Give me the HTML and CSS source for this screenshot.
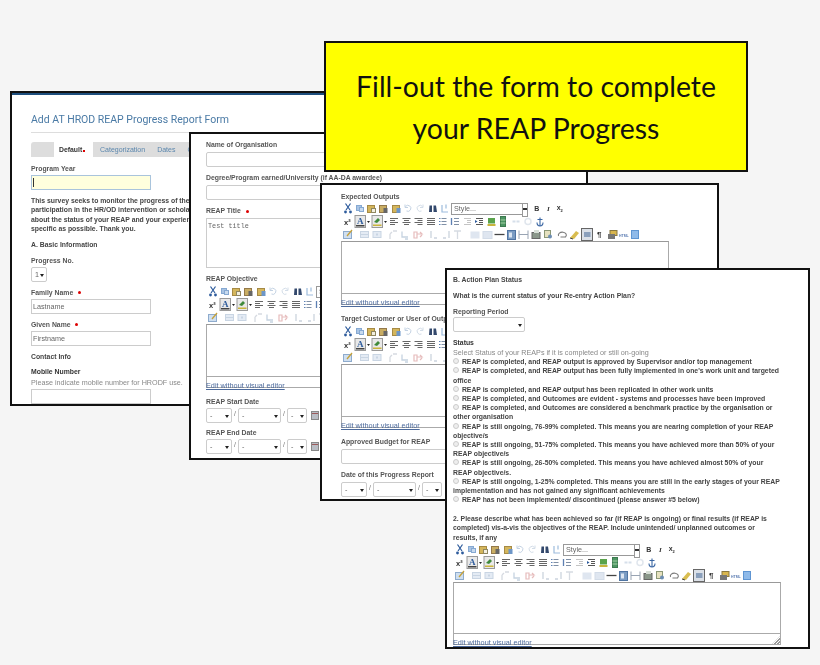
FILE: index.html
```html
<!DOCTYPE html>
<html lang="en">
<head>
    <meta charset="UTF-8">
    <meta name="viewport" content="width=device-width, initial-scale=1.0">
    <title>REAP Progress Report Form</title>
    <link rel="stylesheet" href="styles.css">
</head>
<body>
    <!-- editor toolbar strips, shared by all the rich text fields -->
    <svg class="defs" xmlns="http://www.w3.org/2000/svg">
        <symbol id="row1" viewBox="0 0 110 13">
            <path d="M4.500 1.500l4.500 6.500M9.500 1.500L5 8" stroke="#2d5b9c" stroke-width="1.200" fill="none"/>
            <circle cx="4.500" cy="10" r="1.400" fill="#2d5b9c"/><circle cx="9.500" cy="10" r="1.400" fill="#2d5b9c"/>
            <rect x="15.500" y="3.500" width="5" height="5" fill="#a9c4e4" stroke="#86a9d2"/>
            <rect x="18.500" y="5.500" width="4" height="4" fill="#c8daee" stroke="#86a9d2"/>
            <rect x="26.500" y="3.500" width="7" height="7" fill="#d4b65c" stroke="#a68a45"/>
            <rect x="30.500" y="6.500" width="4" height="4" fill="#f3efe0" stroke="#8f8760"/>
            <rect x="38.500" y="3.500" width="7" height="7" fill="#c9ad63" stroke="#94794a"/>
            <rect x="42.500" y="6" width="4" height="5" fill="#666"/>
            <rect x="51.500" y="3.500" width="7" height="7" fill="#d4b65c" stroke="#a68a45"/>
            <rect x="55.500" y="6" width="4" height="5" fill="#6d96c8"/>
            <path d="M64.500 4.500a3 3 0 1 1 1 4.500M64 2.500v3h3" stroke="#c3d2e3" stroke-width="1" fill="none"/>
            <path d="M81.500 4.500a3 3 0 1 0-1 4.500M82 2.500v3h-3" stroke="#d3dde8" stroke-width="1" fill="none"/>
            <path d="M88.500 3.500h2.500v6.500h-3zM92.500 3.500h2.500l1 6.500h-3.500z" fill="#33486c"/>
            <path d="M101 3v7h4M105 2.500v4M103 10h4" stroke="#9dbcdd" stroke-width="1.200" fill="none"/>
        </symbol>
        <symbol id="row2" viewBox="0 0 210 13">
            <text x="3" y="9.500" class="mini-b">x²</text>
            <rect x="14" y="0.500" width="10.500" height="12" fill="#e9e9e9" stroke="#999"/>
            <text x="16" y="9" class="mini-a">A</text>
            <rect x="15" y="10" width="8.500" height="1.500" fill="#444"/>
            <path d="M26 6h3l-1.500 2z" fill="#222"/>
            <rect x="31" y="0.500" width="10.500" height="12" fill="#e9e9e9" stroke="#999"/>
            <path d="M33 7l4-4 2 2-3 3z" fill="#3f8a3a"/><rect x="32" y="9.500" width="8.500" height="1.500" fill="#c9b43c"/>
            <path d="M43 6h3l-1.500 2z" fill="#222"/>
            <path d="M49 3.500h8M49 5.500h5M49 7.500h8M49 9.500h5" stroke="#666"/>
            <path d="M61.500 3.500h8M63 5.500h5M61.500 7.500h8M63 9.500h5" stroke="#666"/>
            <path d="M73.500 3.500h8M76.500 5.500h5M73.500 7.500h8M76.500 9.500h5" stroke="#666"/>
            <path d="M86 3.500h8M86 5.500h8M86 7.500h8M86 9.500h8" stroke="#666"/>
            <path d="M100.500 3.500h5M100.500 6.500h5M100.500 9.500h5" stroke="#8090a6"/><path d="M98 3.500h1.500M98 6.500h1.500M98 9.500h1.500" stroke="#5d80b3"/>
            <path d="M113 3.500h5M113 6.500h5M113 9.500h5" stroke="#8090a6"/><path d="M110.500 3v7" stroke="#5d80b3" stroke-width="1.300"/>
            <path d="M123 3.500h7M126 5.500h4M126 7.500h4M123 9.500h7" stroke="#c4c4c4"/>
            <path d="M135 3.500h7M138 5.500h4M138 7.500h4M135 9.500h7" stroke="#555"/><path d="M134 5l2.500 1.500-2.500 1.500z" fill="#2d5b9c"/>
            <rect x="147" y="3" width="7" height="5.500" fill="#5aa34b"/><rect x="146.500" y="9" width="8" height="2" fill="#c9b43c"/>
            <rect x="159.500" y="1.500" width="5" height="10" fill="#4d9663" stroke="#3c7a4f"/><path d="M159.500 5h5M159.500 8h5" stroke="#a5d0a5"/>
            <path d="M171.500 6.500h7" stroke="#d6dfea" stroke-width="2" stroke-dasharray="3 1"/>
            <circle cx="187" cy="6.500" r="3" fill="none" stroke="#e0e6ed" stroke-width="1.500"/>
            <path d="M199 2.500v8.500M196.500 4.500h5M196 7.500c0 4.500 6 4.500 6 0" stroke="#3a66a3" stroke-width="1.100" fill="none"/>
        </symbol>
        <symbol id="row3a" viewBox="0 0 252 13">
            <rect x="2.500" y="3.500" width="8" height="7" fill="#cfdff0" stroke="#8eabcd"/><path d="M6 8l5-6" stroke="#c5a13a" stroke-width="1.300"/>
            <rect x="19.500" y="3.500" width="8" height="6" fill="#e4ebf4" stroke="#c9d5e3"/><path d="M19.500 6.500h8" stroke="#c9d5e3"/>
            <rect x="32" y="3.500" width="8" height="6" fill="#e4ebf4" stroke="#c9d5e3"/><rect x="35" y="5.500" width="2" height="2" fill="#c9d5e3"/>
            <path d="M49 11V6M52 3h4M49 6l2-2" stroke="#d6dae1" stroke-width="1.300" fill="none"/>
            <path d="M61 3.500v5.500h6M64 11h3" stroke="#c6d3e1" stroke-width="1.300" fill="none"/>
            <path d="M73 4h3v6h-3zM76 6h5l-2-2M79 9l2-2" stroke="#e6bcbc" stroke-width="1.200" fill="none"/>
            <path d="M90 3v7M93 10h3" stroke="#ccd4de" stroke-width="1.300" fill="none"/>
            <path d="M102 10h3M108 3v7" stroke="#ccd4de" stroke-width="1.300" fill="none"/>
            <path d="M113 3h7M116.500 3v8" stroke="#d6dbe2" stroke-width="1.300" fill="none"/>
            <rect x="129.500" y="3.500" width="9" height="7" fill="#dfe6f0"/>
            <rect x="142" y="3.500" width="9" height="7" fill="#dfe6f0" stroke="#d3dce8"/>
            <path d="M153.500 6.500h10" stroke="#444" stroke-width="1.300"/>
            <rect x="166.500" y="2.500" width="8" height="9" fill="#7b9cc3" stroke="#4f74a2"/><rect x="168" y="4.500" width="3" height="5" fill="#dce6f2"/>
            <path d="M178 2.500v8.500M187 2.500v8.500M178 6.500h9" stroke="#99a4b3" stroke-width="1"/>
            <rect x="191" y="4.500" width="8" height="6" fill="#8a978a" stroke="#666"/><rect x="193" y="2" width="5" height="3" fill="#d6ded6"/>
            <rect x="203.500" y="2.500" width="6" height="7" fill="#e6e1bf" stroke="#8b9775"/><circle cx="209" cy="8.500" r="2" fill="#6d8db2"/>
            <path d="M217.500 8a4 3 0 1 1 7 1h-5" stroke="#7a7a7a" stroke-width="1.100" fill="none"/>
            <path d="M229 10l6-7 3 2-5 6z" fill="#d9bd50"/><path d="M229 10l3 1" stroke="#444"/>
            <rect x="240.500" y="0.500" width="11" height="12" fill="#dbe0e7" stroke="#666"/><rect x="243" y="4" width="6.500" height="5" fill="#8ba0bc"/>
        </symbol>
        <symbol id="row3b" viewBox="0 0 55 13">
            <rect x="17" y="2.500" width="7" height="5" fill="#d9b64e" stroke="#8a7840"/><rect x="15" y="6" width="7" height="5" fill="#777"/>
            <text x="26" y="8.500" class="mini-h">HTML</text>
            <rect x="38.500" y="2.500" width="7" height="8" fill="#8fbae9" stroke="#5f95d2"/>
        </symbol>
        <symbol id="calendar" viewBox="0 0 9 9">
            <rect x="0.500" y="0.500" width="7" height="8" fill="#b9bdc4" stroke="#888"/><path d="M1 2.500h6" stroke="#9b5a5a"/>
        </symbol>
    </svg>

    <section class="sheet sheet-main">
        <h1 class="form-title">Add AT HROD REAP Progress Report Form</h1>
        <div class="tabs">
            <span class="tab tab-active">Default<i class="req-inline"></i></span>
            <span class="tab">Categorization</span>
            <span class="tab">Dates</span>
            <span class="tab">Contact</span>
        </div>
        <div class="field">
            <label>Program Year</label>
            <div class="input input-focus"><i class="caret"></i></div>
        </div>
        <p class="intro">This survey seeks to monitor the progress of the<br>participation in the HR/OD intervention or scholar<br>about the status of your REAP and your experience<br>specific as possible. Thank you.</p>
        <h2 class="group">A. Basic Information</h2>
        <div class="field">
            <label>Progress No.</label>
            <div class="pick pick-no">1</div>
        </div>
        <div class="field">
            <label>Family Name <i class="req"></i></label>
            <div class="input">Lastname</div>
        </div>
        <div class="field">
            <label>Given Name <i class="req"></i></label>
            <div class="input">Firstname</div>
        </div>
        <h2 class="group">Contact Info</h2>
        <label class="strong">Mobile Number</label>
        <div class="hint">Please indicate mobile number for HRODF use.</div>
        <div class="input"></div>
    </section>

    <section class="sheet sheet-org">
        <div class="field">
            <label>Name of Organisation</label>
            <div class="input input-long"></div>
        </div>
        <div class="field">
            <label>Degree/Program earned/University (if AA-DA awardee)</label>
            <div class="input input-long"></div>
        </div>
        <div class="field">
            <label>REAP Title <i class="req"></i></label>
            <div class="textarea">Test title</div>
        </div>
        <label class="tight">REAP Objective</label>
        <div class="toolbar">
            <div class="tb-row">
                <svg class="tb-left"><use href="#row1"/></svg>
                <div class="style-pick">Style...</div>
                <b class="tb-txt">B</b><b class="tb-txt tb-i">I</b><b class="tb-txt">x<sub>2</sub></b>
            </div>
            <svg class="tb-row2"><use href="#row2"/></svg>
            <div class="tb-row">
                <svg class="tb-row3"><use href="#row3a"/></svg>
                <b class="tb-para">¶</b>
                <svg class="tb-row3b"><use href="#row3b"/></svg>
            </div>
        </div>
        <div class="editor">
            <div class="editor-area"></div>
            <div class="editor-foot"><a class="edit-link">Edit without visual editor</a></div>
        </div>
        <div class="field field-date">
            <label>REAP Start Date</label>
            <div class="date-row">
                <div class="pick pick-s">-</div><span class="sl">/</span>
                <div class="pick pick-m">-</div><span class="sl">/</span>
                <div class="pick pick-y">-</div>
                <svg class="cal"><use href="#calendar"/></svg>
            </div>
        </div>
        <div class="field field-date">
            <label>REAP End Date</label>
            <div class="date-row">
                <div class="pick pick-s">-</div><span class="sl">/</span>
                <div class="pick pick-m">-</div><span class="sl">/</span>
                <div class="pick pick-y">-</div>
                <svg class="cal"><use href="#calendar"/></svg>
            </div>
        </div>
    </section>

    <section class="sheet sheet-outputs">
        <label class="tight first">Expected Outputs</label>
        <div class="toolbar">
            <div class="tb-row">
                <svg class="tb-left"><use href="#row1"/></svg>
                <div class="style-pick">Style...</div>
                <b class="tb-txt">B</b><b class="tb-txt tb-i">I</b><b class="tb-txt">x<sub>2</sub></b>
            </div>
            <svg class="tb-row2"><use href="#row2"/></svg>
            <div class="tb-row">
                <svg class="tb-row3"><use href="#row3a"/></svg>
                <b class="tb-para">¶</b>
                <svg class="tb-row3b"><use href="#row3b"/></svg>
            </div>
        </div>
        <div class="editor">
            <div class="editor-area"></div>
            <div class="editor-foot"><a class="edit-link">Edit without visual editor</a></div>
        </div>
        <label class="tight">Target Customer or User of Outputs</label>
        <div class="toolbar">
            <div class="tb-row">
                <svg class="tb-left"><use href="#row1"/></svg>
                <div class="style-pick">Style...</div>
                <b class="tb-txt">B</b><b class="tb-txt tb-i">I</b><b class="tb-txt">x<sub>2</sub></b>
            </div>
            <svg class="tb-row2"><use href="#row2"/></svg>
            <div class="tb-row">
                <svg class="tb-row3"><use href="#row3a"/></svg>
                <b class="tb-para">¶</b>
                <svg class="tb-row3b"><use href="#row3b"/></svg>
            </div>
        </div>
        <div class="editor">
            <div class="editor-area"></div>
            <div class="editor-foot"><a class="edit-link">Edit without visual editor</a></div>
        </div>
        <div class="field">
            <label>Approved Budget for REAP</label>
            <div class="input input-long"></div>
        </div>
        <div class="field">
            <label>Date of this Progress Report</label>
            <div class="date-row">
                <div class="pick pick-s">-</div><span class="sl">/</span>
                <div class="pick pick-m">-</div><span class="sl">/</span>
                <div class="pick pick-y">-</div>
                <svg class="cal"><use href="#calendar"/></svg>
            </div>
        </div>
    </section>

    <section class="sheet sheet-status">
        <h2 class="group">B. Action Plan Status</h2>
        <h2 class="group">What is the current status of your Re-entry Action Plan?</h2>
        <div class="field">
            <label>Reporting Period</label>
            <div class="pick pick-period"></div>
        </div>
        <label class="strong">Status</label>
        <div class="hint">Select Status of your REAPs if it is completed or still on-going</div>
        <ul class="status-list">
            <li><i class="radio"></i> REAP is completed, and REAP output is approved by Supervisor and/or top management</li>
            <li><i class="radio"></i> REAP is completed, and REAP output has been fully implemented in one's work unit and targeted office</li>
            <li><i class="radio"></i> REAP is completed, and REAP output has been replicated in other work units</li>
            <li><i class="radio"></i> REAP is completed, and Outcomes are evident - systems and processes have been improved</li>
            <li><i class="radio"></i> REAP is completed, and Outcomes are considered a benchmark practice by the organisation or other organisation</li>
            <li><i class="radio"></i> REAP is still ongoing, 76-99% completed. This means you are nearing completion of your REAP objective/s</li>
            <li><i class="radio"></i> REAP is still ongoing, 51-75% completed. This means you have achieved more than 50% of your REAP objective/s</li>
            <li><i class="radio"></i> REAP is still ongoing, 26-50% completed. This means you have achieved almost 50% of your REAP objective/s.</li>
            <li><i class="radio"></i> REAP is still ongoing, 1-25% completed. This means you are still in the early stages of your REAP implementation and has not gained any significant achievements</li>
            <li><i class="radio"></i> REAP has not been implemented/ discontinued (please answer #5 below)</li>
        </ul>
        <p class="question">2. Please describe what has been achieved so far (if REAP is ongoing) or final results (if REAP is completed) vis-a-vis the objectives of the REAP. Include unintended/ unplanned outcomes or results, if any</p>
        <div class="toolbar">
            <div class="tb-row">
                <svg class="tb-left"><use href="#row1"/></svg>
                <div class="style-pick">Style...</div>
                <b class="tb-txt">B</b><b class="tb-txt tb-i">I</b><b class="tb-txt">x<sub>2</sub></b>
            </div>
            <svg class="tb-row2"><use href="#row2"/></svg>
            <div class="tb-row">
                <svg class="tb-row3"><use href="#row3a"/></svg>
                <b class="tb-para">¶</b>
                <svg class="tb-row3b"><use href="#row3b"/></svg>
            </div>
        </div>
        <div class="editor">
            <div class="editor-area"></div>
            <div class="editor-foot"><a class="edit-link">Edit without visual editor</a><i class="grip"></i></div>
        </div>
    </section>

    <section class="callout">
        <p>Fill-out the form to complete<br>your REAP Progress</p>
    </section>
</body>
</html>
```

FILE: styles.css
```css
* {
    box-sizing: border-box;
}
html, body {
    height: 100%;
}
body {
    margin: 0;
    background: #f5f5f5;
    overflow: hidden;
    font-family: "Liberation Sans", Arial, sans-serif;
    font-size: 6.850px;
    color: #444;
}
.defs {
    display: none;
}

/* the overlapping screenshots */
.sheet {
    position: absolute;
    background: #fff;
    border: 2px solid #111;
    overflow: hidden;
    filter: blur(0.4px);
}
.sheet-main {
    left: 10px;
    top: 91px;
    width: 340px;
    height: 315px;
    padding: 20px 19px 0;
    box-shadow: inset 0 2px 0 #1d4e7d;
}
.sheet-org {
    left: 189px;
    top: 132px;
    width: 399px;
    height: 328px;
    padding: 6px 15px 0;
}
.sheet-outputs {
    left: 320px;
    top: 183px;
    width: 399px;
    height: 318px;
    padding: 7px 19px 0;
}
.sheet-status {
    left: 445px;
    top: 268px;
    width: 365px;
    height: 381px;
    padding: 5px 6px 0;
}

.callout {
    position: absolute;
    left: 324px;
    top: 41px;
    width: 424px;
    height: 131px;
    background: #ff0;
    border: 2px solid #111;
    display: flex;
    align-items: center;
    justify-content: center;
}
.callout p {
    margin: 0;
    text-align: center;
    font-family: Lato, "Open Sans", sans-serif;
    font-size: 28.400px;
    line-height: 42px;
    color: #111;
}

/* form parts */
.form-title {
    margin: 0 0 9px;
    padding-bottom: 5px;
    font-family: Roboto, sans-serif;
    font-weight: 400;
    font-size: 10.500px;
    line-height: 14px;
    color: #4a7aa5;
    border-bottom: 1px solid #ddd;
    white-space: nowrap;
}
.tabs {
    display: flex;
    height: 15px;
    background: #ddd;
    padding-left: 23px;
    margin-bottom: 7px;
    border-radius: 3px 3px 0 0;
    font-size: 7px;
}
.tab {
    padding: 0 6px;
    line-height: 16px;
    color: #5a86ad;
    white-space: nowrap;
}
.tab-active {
    width: 39px;
    background: #fff;
    color: #333;
    font-size: 6.850px;
    font-weight: bold;
    padding: 0 0 0 5px;
    margin-right: 1px;
}
.req-inline {
    display: inline-block;
    width: 2px;
    height: 2px;
    margin-left: 1px;
    background: #d00;
}
.field {
    margin-bottom: 6px;
}
.field-date {
    margin-bottom: 5px;
}
.field-date label {
    margin-bottom: 1px;
}
label {
    display: block;
    height: 10px;
    line-height: 10px;
    margin-bottom: 2px;
    font-weight: bold;
    color: #555;
    white-space: nowrap;
}
label.tight {
    margin-bottom: 1px;
}
label.first {
    margin-bottom: 0;
}
label.strong {
    margin-bottom: 0;
    color: #333;
}
.sheet-main label {
    margin-bottom: 1px;
}
.sheet-status label {
    margin-bottom: 0;
}
.req {
    display: inline-block;
    width: 3px;
    height: 3px;
    margin-left: 3px;
    background: #d00;
    border-radius: 50%;
    vertical-align: middle;
}
.hint {
    font-size: 7.200px;
    line-height: 10px;
    color: #888;
    white-space: nowrap;
}
.sheet-main .hint {
    margin-bottom: 1px;
}
.sheet-status .hint {
    line-height: 9.200px;
}
.input {
    width: 120px;
    height: 15px;
    line-height: 13px;
    border: 1px solid #ccc;
    padding-left: 1px;
    font-size: 7.200px;
    color: #666;
}
.input-long {
    width: 328px;
    border-radius: 2px;
}
.input-focus {
    background: #ffd;
    border-color: #a9c4dc;
}
.caret {
    display: block;
    width: 1px;
    height: 9px;
    margin-top: 2px;
    background: #333;
}
.textarea {
    width: 328px;
    height: 50px;
    border: 1px solid #ccc;
    padding: 3px 1px;
    font-family: "Liberation Mono", monospace;
    font-size: 6.800px;
    color: #666;
}
.intro {
    margin: 0 0 6px;
    line-height: 9.400px;
    font-weight: bold;
    color: #444;
    white-space: nowrap;
}
.group {
    margin: 0 0 6px;
    font-size: 6.850px;
    line-height: 10px;
    font-weight: bold;
    color: #444;
}
.sheet-main .group + .strong {
    margin-top: -1px;
}
.pick {
    position: relative;
    height: 15px;
    line-height: 13px;
    padding-left: 3px;
    background: #fff;
    border: 1px solid #ccc;
    border-radius: 2px;
    font-size: 7.200px;
    color: #666;
}
.pick::after {
    content: "";
    position: absolute;
    right: 2px;
    top: 6px;
    border: 2px solid transparent;
    border-top: 3px solid #222;
    border-bottom: 0;
}
.pick-no { width: 16px; }
.pick-s { width: 26px; }
.pick-m { width: 43px; }
.pick-y { width: 20px; }
.pick-period { width: 72px; }
.date-row {
    display: flex;
    align-items: center;
}
.sl {
    width: 6px;
    text-align: center;
    margin-top: -4px;
    color: #777;
}
.cal {
    width: 9px;
    height: 9px;
    margin-left: 4px;
}

/* editor toolbar */
.toolbar {
    height: 39px;
}
.tb-row {
    display: flex;
    align-items: center;
    height: 13px;
}
.tb-left {
    width: 110px;
    height: 13px;
    flex: none;
}
.tb-row2 {
    display: block;
    width: 210px;
    height: 13px;
}
.tb-row3 {
    width: 252px;
    height: 13px;
    flex: none;
}
.tb-row3b {
    width: 55px;
    height: 13px;
    flex: none;
}
.tb-para {
    width: 0;
    margin-left: 4px;
    margin-right: -4px;
    font-size: 8px;
    color: #333;
}
.style-pick {
    position: relative;
    flex: none;
    width: 73px;
    height: 12px;
    line-height: 10px;
    padding-left: 2px;
    margin-right: 7px;
    border: 1px solid #999;
    font-size: 7.200px;
    color: #666;
}
.style-pick::after {
    content: "";
    position: absolute;
    top: -1px;
    right: -5px;
    width: 4px;
    height: 12px;
    border: 1px solid #999;
    background: linear-gradient(#fff 4px, #333 4px, #333 6px, #fff 6px);
}
.tb-txt {
    flex: none;
    width: 11.500px;
    text-align: center;
    color: #333;
    font-size: 7px;
}
.tb-i {
    font-style: italic;
    font-family: "Liberation Serif", serif;
}
.tb-txt sub {
    font-size: 4px;
}
.mini-b {
    font: bold 7.500px "Liberation Sans", sans-serif;
    fill: #333;
}
.mini-a {
    font: bold 9px "Liberation Serif", serif;
    fill: #2d5b9c;
}
.mini-h {
    font: bold 3.500px "Liberation Sans", sans-serif;
    fill: #5d7db3;
}
.editor {
    width: 328px;
    margin-bottom: 9px;
    border: 1px solid #aaa;
    border-top-color: #999;
    background: #fff;
}
.editor-area {
    height: 52px;
    border-bottom: 1px solid #aaa;
}
.editor-foot {
    position: relative;
    height: 10px;
}
.edit-link {
    position: absolute;
    left: -1px;
    bottom: -4px;
    font-size: 7.300px;
    line-height: 10px;
    color: #4c6a9c;
    text-decoration: underline;
    white-space: nowrap;
}
.grip {
    position: absolute;
    right: 0;
    bottom: 0;
    width: 8px;
    height: 8px;
    background: repeating-linear-gradient(135deg, transparent 0 1px, #999 1px 2px);
    clip-path: polygon(100% 0, 100% 100%, 0 100%);
}

/* status options */
.status-list {
    list-style: none;
    margin: 0 0 9.500px;
    padding: 0;
    width: 327px;
    line-height: 9.200px;
    font-weight: bold;
    color: #444;
}
.radio {
    display: inline-block;
    width: 6px;
    height: 6px;
    margin: 0 1px 0 0;
    border: 1px solid #ccc;
    background: #eee;
    border-radius: 50%;
}
.question {
    margin: 0 0 1.500px;
    width: 327px;
    line-height: 9.300px;
    font-weight: bold;
    color: #444;
}
.sheet-status .editor {
    margin: 0;
}
.sheet-status .editor-area {
    height: 51px;
}
```
